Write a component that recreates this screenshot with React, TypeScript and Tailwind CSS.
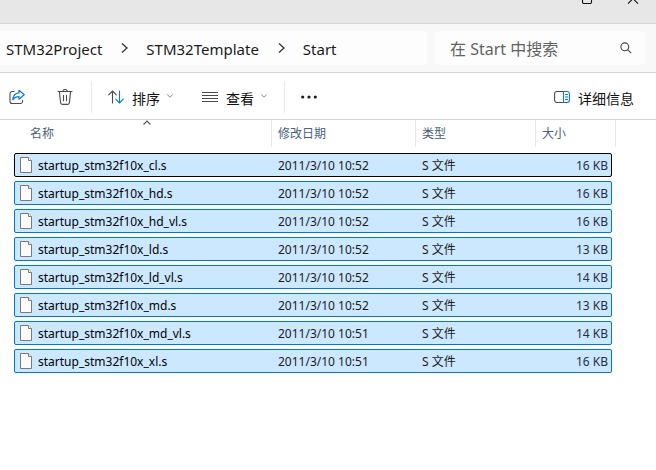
import React, { useState } from "react";

const crumbs = ["STM32Project", "STM32Template", "Start"];

const files = [
  { name: "startup_stm32f10x_cl.s", date: "2011/3/10 10:52", size: "16 KB" },
  { name: "startup_stm32f10x_hd.s", date: "2011/3/10 10:52", size: "16 KB" },
  { name: "startup_stm32f10x_hd_vl.s", date: "2011/3/10 10:52", size: "16 KB" },
  { name: "startup_stm32f10x_ld.s", date: "2011/3/10 10:52", size: "13 KB" },
  { name: "startup_stm32f10x_ld_vl.s", date: "2011/3/10 10:52", size: "14 KB" },
  { name: "startup_stm32f10x_md.s", date: "2011/3/10 10:52", size: "13 KB" },
  { name: "startup_stm32f10x_md_vl.s", date: "2011/3/10 10:51", size: "14 KB" },
  { name: "startup_stm32f10x_xl.s", date: "2011/3/10 10:51", size: "16 KB" },
];

const palette = {
  accent: "#0f78d4",
  ink: "#4a4a4a",
};

function ChevronRight() {
  return (
    <svg className="h-3 w-3" viewBox="0 0 12 12" fill="none" stroke="#333333" strokeWidth="1.3">
      <path d="M4 1.5 9 6 4 10.5" />
    </svg>
  );
}

function ChevronDown() {
  return (
    <svg className="mb-0.5 h-2 w-2" viewBox="0 0 8 8" fill="none" stroke="#8a8a8a" strokeWidth="1">
      <path d="M1.2 2.5 4 5.2 6.8 2.5" />
    </svg>
  );
}

function ShareIcon() {
  return (
    <svg className="h-4 w-4" viewBox="0 0 16 16" fill="none" strokeLinecap="round" strokeLinejoin="round">
      <path
        d="M5 2.5H3.3A2.3 2.3 0 0 0 1 4.8v7.4a2.3 2.3 0 0 0 2.3 2.3h8A2.3 2.3 0 0 0 13.6 12.2V11.5"
        stroke={palette.ink}
        strokeWidth="1.1"
      />
      <path
        d="M10 1.3 15.2 5.8 10 10.2V7.6C7.2 7.6 5.4 8.4 3.8 10.8 4.1 7 6 4.2 10 3.9Z"
        stroke={palette.accent}
        strokeWidth="1.2"
      />
    </svg>
  );
}

function TrashIcon() {
  return (
    <svg
      className="h-4 w-4"
      viewBox="0 0 16 16"
      fill="none"
      stroke={palette.ink}
      strokeWidth="1.1"
      strokeLinecap="round"
      strokeLinejoin="round"
    >
      <path d="M1 2.5h14M5.8 2.4a2.2 1.9 0 0 1 4.4 0M2.4 2.6l1.2 11.2a1.8 1.8 0 0 0 1.8 1.6h5.2a1.8 1.8 0 0 0 1.8-1.6L13.6 2.6M6.5 6.2v5.6M9.5 6.2v5.6" />
    </svg>
  );
}

function SortIcon() {
  return (
    <svg className="h-4 w-4" viewBox="0 0 16 16" fill="none" strokeWidth="1.1" strokeLinecap="round" strokeLinejoin="round">
      <path d="M4.5 14V2M.7 5.8 4.5 2l3.8 3.8" stroke={palette.ink} />
      <path d="M11.5 2v12M7.8 10.2 11.5 14l3.8-3.8" stroke={palette.accent} />
    </svg>
  );
}

function ViewIcon() {
  return (
    <svg className="h-4 w-4" viewBox="0 0 16 16" fill="none" stroke={palette.ink} strokeWidth="1">
      <path d="M0 3.5h16M0 6.5h16M0 9.5h16M0 12.5h16" />
    </svg>
  );
}

function DetailsIcon() {
  return (
    <svg className="h-4 w-4" viewBox="0 0 16 16" fill="none" strokeWidth="1.1">
      <path d="M9 2.5H2.8A2.2 2.2 0 0 0 .6 4.7v6.6a2.2 2.2 0 0 0 2.2 2.2H9" stroke={palette.ink} />
      <path d="M9.5 2.5h3.7a2.2 2.2 0 0 1 2.2 2.2v6.6a2.2 2.2 0 0 1-2.2 2.2H9.5Z" stroke={palette.accent} />
      <path d="M11 5.5h3M11 8h3M11 10.5h3" stroke={palette.accent} />
    </svg>
  );
}

function FileIcon() {
  return (
    <svg className="h-4 w-3 shrink-0" viewBox="0 0 12 16" fill="#fbfbfb" stroke="#7b7b7b" strokeWidth="1">
      <path d="M.5.5h8l3 3v12H.5Z" />
      <path d="M8.5.5v3h3" />
    </svg>
  );
}

function App() {
  const [query, setQuery] = useState("");

  return (
    <div className="min-h-screen w-full overflow-hidden bg-white font-['Noto_Sans','Noto_Sans_CJK_SC',sans-serif] text-xs text-[#1b1b1b]">
      <header className="flex h-6 items-start justify-end border-b border-[#d4d4d4] bg-[#e7e7e7] pr-[17px]">
        <button aria-label="最大化" className="mr-[34px]">
          <svg className="h-2 w-3" viewBox="0 0 12 8" fill="none" stroke="#111111" strokeWidth="1.1">
            <path d="M1.5-4v6A1.5 1.5 0 0 0 3 3.5h6A1.5 1.5 0 0 0 10.5 2v-6" />
          </svg>
        </button>
        <button aria-label="关闭">
          <svg className="h-2 w-3" viewBox="0 0 12 8" fill="none" stroke="#111111" strokeWidth="1.1">
            <path d="M1-6.5 11 3.7M11-6.5 1 3.7" />
          </svg>
        </button>
      </header>

      <div className="flex h-[49px] items-center gap-2 border-b border-[#d4d4d4] bg-[#f8f8f8] pr-[11px]">
        <nav className="flex h-[34px] flex-1 items-center gap-4 rounded-r bg-[#fdfdfd] pl-[6px] text-[15px] whitespace-nowrap">
          {crumbs.map((crumb, index) => (
            <React.Fragment key={crumb}>
              {index > 0 && <ChevronRight />}
              <a href="#" className="pt-0.5">
                {crumb}
              </a>
            </React.Fragment>
          ))}
        </nav>
        <label className="flex h-[34px] w-[210px] items-center rounded bg-[#fdfdfd] pr-[13px] pl-[15px]">
          <input
            type="text"
            aria-label="搜索"
            value={query}
            onChange={(e) => setQuery(e.target.value)}
            placeholder="在 Start 中搜索"
            className="min-w-0 flex-1 pt-0.5 text-base outline-none placeholder:text-[#626262]"
          />
          <svg className="h-3 w-3" viewBox="0 0 12 12" fill="none" stroke="#444444" strokeWidth="1.1">
            <circle cx="4.8" cy="4.8" r="3.9" />
            <path d="m7.6 7.6 3.6 3.6" />
          </svg>
        </label>
      </div>

      <div className="flex h-[47px] items-center border-b border-[#d4d4d4] pt-0.5 pr-[22px] pl-[9px] text-sm text-[#111111]">
        <button aria-label="共享">
          <ShareIcon />
        </button>
        <button aria-label="删除" className="ml-8">
          <TrashIcon />
        </button>
        <div className="ml-[18px] h-8 w-px bg-[#e8e8e8]" />
        <button className="ml-4 flex items-center gap-[6px]">
          <SortIcon />
          <span className="pt-1 pl-0.5">排序</span>
          <ChevronDown />
        </button>
        <button className="ml-7 flex items-center gap-[6px]">
          <ViewIcon />
          <span className="pt-1 pl-0.5">查看</span>
          <ChevronDown />
        </button>
        <div className="ml-4 h-8 w-px bg-[#e8e8e8]" />
        <button aria-label="更多" className="ml-4">
          <svg className="h-4 w-4" viewBox="0 0 16 16" fill="#1b1b1b">
            <circle cx="1.7" cy="8" r="1.6" />
            <circle cx="8" cy="8" r="1.6" />
            <circle cx="14.3" cy="8" r="1.6" />
          </svg>
        </button>
        <button className="ml-auto flex items-center gap-[6px]">
          <DetailsIcon />
          <span className="pt-1 pl-0.5">详细信息</span>
        </button>
      </div>

      <table className="block w-full">
        <thead className="block">
          <tr className="mr-10 ml-[14px] grid h-[27px] grid-cols-[1fr_144px_120px_80px] text-left text-[#4c607a] *:border-r *:border-[#e5e5e5] *:pl-[6px] *:leading-[27px] *:font-normal">
            <th className="relative" aria-sort="ascending">
              <span className="pl-[10px]">名称</span>
              <svg
                className="absolute top-0 left-1/2 h-[6px] w-2"
                viewBox="0 0 8 6"
                fill="none"
                stroke="#555555"
                strokeWidth="1.1"
              >
                <path d="M.5 4.5 4 1 7.5 4.5" />
              </svg>
            </th>
            <th>修改日期</th>
            <th>类型</th>
            <th>大小</th>
          </tr>
        </thead>
        <tbody className="mt-[6px] mr-11 ml-[14px] flex flex-col gap-1">
          {files.map((file, index) => (
            <tr
              key={file.name}
              className={`grid h-6 grid-cols-[1fr_144px_120px_75px] items-center rounded-xs border bg-[#cce8ff] ${
                index === 0 ? "border-black" : "border-[#0078d7]"
              }`}
            >
              <td className="flex items-center gap-[6px] pl-[5px] text-black">
                <FileIcon />
                <span className="pt-0.5">{file.name}</span>
              </td>
              <td className="pt-0.5 pl-[6px]">{file.date}</td>
              <td className="pt-0.5 pl-[6px]">S 文件</td>
              <td className="pt-0.5 pr-[3px] text-right text-[#1f2f4a]">{file.size}</td>
            </tr>
          ))}
        </tbody>
      </table>
    </div>
  );
}

export default App;
